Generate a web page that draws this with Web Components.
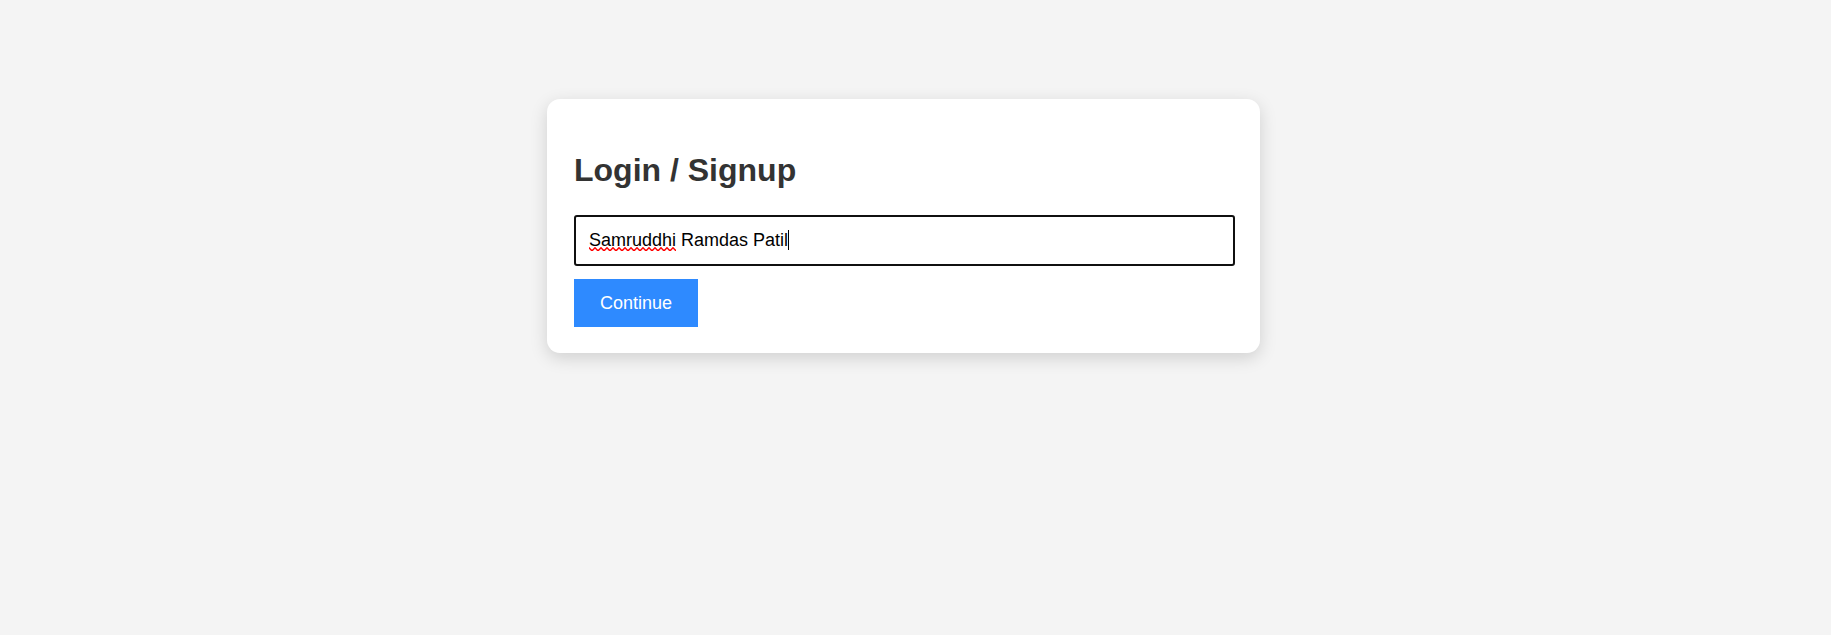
<!DOCTYPE html>
<html lang="en">
<head>
<meta charset="utf-8">
<meta name="viewport" content="width=device-width, initial-scale=1">
<title>Login / Signup</title>
<style>
  body { margin: 0; background: #f4f4f4; font-family: Arial, "Liberation Sans", sans-serif; color: #333; }
</style>
</head>
<body>
<login-page></login-page>
<script>
class FormCard extends HTMLElement {
  constructor() {
    super();
    this.attachShadow({ mode: "open" }).innerHTML = `
      <style>
        :host { display: block; box-sizing: border-box; width: 100%; max-width: 713px; padding: 26px 27px; background: #fff;
          border-radius: 13px; box-shadow: 0 5px 17px rgba(0, 0, 0, .15); }
        h2 { margin: 27px 0; font-size: 32px; line-height: 36px; font-weight: 700; }
      </style>
      <h2><slot name="title"></slot></h2>
      <slot></slot>`;
  }
}
customElements.define("form-card", FormCard);

class NameField extends HTMLElement {
  constructor() {
    super();
    this.attachShadow({ mode: "open" }).innerHTML = `
      <style>
        :host { display: block; position: relative; margin-right: -2px; }
        input { display: block; box-sizing: border-box; width: 100%; height: 51px; margin: 0; padding: 0 13px;
          border: 2px solid #101010; border-radius: 3px; outline: none; background: #fff; color: #000;
          font: 18px/20px Arial, "Liberation Sans", sans-serif; caret-color: transparent; }
        .spelling { position: absolute; left: 15px; top: 32px; width: 87px; height: 4px; }
        .caret { position: absolute; left: 214px; top: 15px; width: 1px; height: 20px; background: #000; }
      </style>
      <input type="text" aria-label="Name" spellcheck="false">
      <svg class="spelling" aria-hidden="true">
        <defs><pattern id="wave" width="6" height="4" patternUnits="userSpaceOnUse">
          <path d="M-1 -.3L0 .7L2.4 3.2H3.6L6 .7L7 -.3" fill="none" stroke="#f00" stroke-width="1.4"/>
        </pattern></defs>
        <rect width="100%" height="4" fill="url(#wave)"/>
      </svg>
      <span class="caret"></span>`;
    this.shadowRoot.querySelector("input").value = this.getAttribute("value") || "";
  }
}
customElements.define("name-field", NameField);

class ActionButton extends HTMLElement {
  constructor() {
    super();
    this.attachShadow({ mode: "open" }).innerHTML = `
      <style>
        :host { display: block; margin-top: 13px; }
        button { display: block; margin: 0; padding: 14px 26px; border: 0; background: #2e8aff; color: #fff;
          font: 18px/20px Arial, "Liberation Sans", sans-serif; cursor: pointer; }
      </style>
      <button type="button"><slot></slot></button>`;
  }
}
customElements.define("action-button", ActionButton);

class LoginPage extends HTMLElement {
  constructor() {
    super();
    this.attachShadow({ mode: "open" }).innerHTML = `
      <style>
        :host { display: block; }
        main { display: flex; justify-content: center; padding: 99px 24px 24px 0; }
      </style>
      <main>
        <form-card>
          <span slot="title">Login / Signup</span>
          <name-field value="Samruddhi Ramdas Patil"></name-field>
          <action-button>Continue</action-button>
        </form-card>
      </main>`;
  }
}
customElements.define("login-page", LoginPage);
</script>
</body>
</html>
